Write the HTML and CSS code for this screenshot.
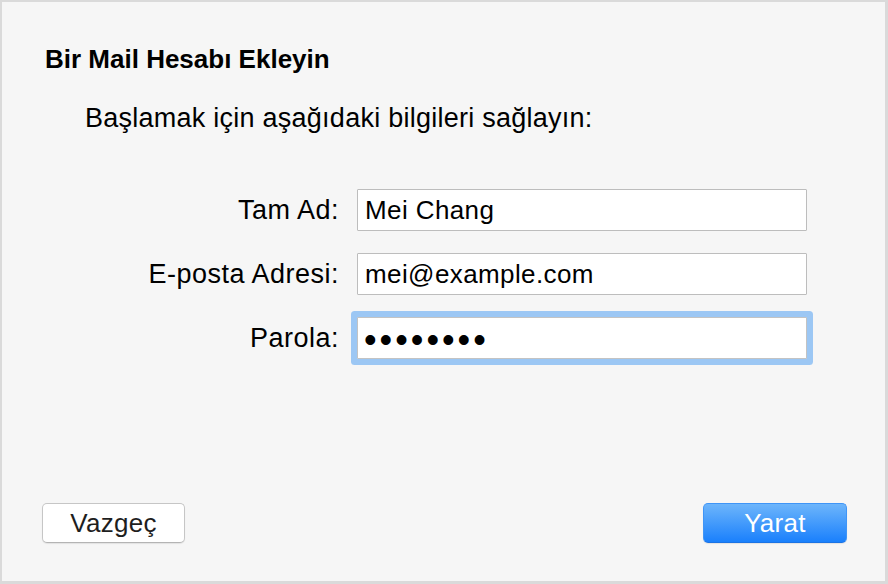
FILE: index.html
```html
<!DOCTYPE html>
<html lang="tr">
<head>
  <meta charset="UTF-8">
  <title>Bir Mail Hesabı Ekleyin</title>
  <meta name="viewport" content="width=device-width, initial-scale=1.0">
  <link rel="stylesheet" href="styles.css">
</head>
<body>
  <div class="window">
    <h1 class="title">Bir Mail Hesabı Ekleyin</h1>
    <p class="intro">Başlamak için aşağıdaki bilgileri sağlayın:</p>

    <form class="form" onsubmit="return false">
      <label for="name">Tam Ad:</label>
      <input id="name" type="text" value="Mei Chang">

      <label for="email">E-posta Adresi:</label>
      <input id="email" type="text" value="mei@example.com">

      <label for="pass">Parola:</label>
      <input id="pass" class="focused" type="password" value="password">
    </form>

    <div class="buttons">
      <button class="btn">Vazgeç</button>
      <button class="btn primary">Yarat</button>
    </div>
  </div>
</body>
</html>
```

FILE: styles.css
```css
/* Reset */
* {
  margin: 0;
  padding: 0;
  box-sizing: border-box;
  font-family: "Liberation Sans", Arial, sans-serif;
}

body {
  background: #f6f6f6;
}

/* Dialog window */
.window {
  height: 584px;
  display: flex;
  flex-direction: column;
  background: #f6f6f6;
  border-style: solid;
  border-color: #dadada;
  border-width: 2px 3px 3px 2px;
  padding: 42px 38px 38px 40px;
  color: #000;
}

.title {
  font-size: 26px;
  line-height: 30px;
  font-weight: bold;
  padding-left: 3px;
}

.intro {
  font-size: 27px;
  letter-spacing: 0.25px;
  line-height: 30px;
  margin-top: 29px;
  padding-left: 43px;
}

/* Form */
.form {
  display: grid;
  grid-template-columns: 297px 450px;
  column-gap: 18px;
  row-gap: 22px;
  align-items: center;
  margin-top: 56px;
}

.form label {
  font-size: 27px;
  letter-spacing: 0.5px;
  text-align: right;
}

.form input {
  height: 42px;
  font-size: 26px;
  letter-spacing: 0.4px;
  padding: 0 7px;
  border: 1px solid #bdbdbd;
  background: #fff;
  color: #000;
  outline: none;
  border-radius: 1px;
}

.form input.focused {
  border-color: #c3c3c3;
  box-shadow: 0 0 0 6px #9cc7f4;
  font-size: 36px;
  letter-spacing: 3px;
  padding: 4px 6px 0;
}

/* Buttons */
.buttons {
  margin-top: auto;
  display: flex;
  justify-content: space-between;
}

.btn {
  width: 143px;
  height: 40px;
  font-size: 26px;
  letter-spacing: 0.3px;
  color: #1e1e1e;
  background: #fff;
  border: 1px solid #c6c6c6;
  border-bottom-color: #b4b4b4;
  border-radius: 5px;
  box-shadow: 0 1px 1px rgba(0, 0, 0, 0.08);
}

.btn.primary {
  width: 144px;
  color: #fff;
  background: linear-gradient(#6db5fb, #1a80fc);
  border-color: #3f95f7;
  border-bottom-color: #1c73e4;
}
```
